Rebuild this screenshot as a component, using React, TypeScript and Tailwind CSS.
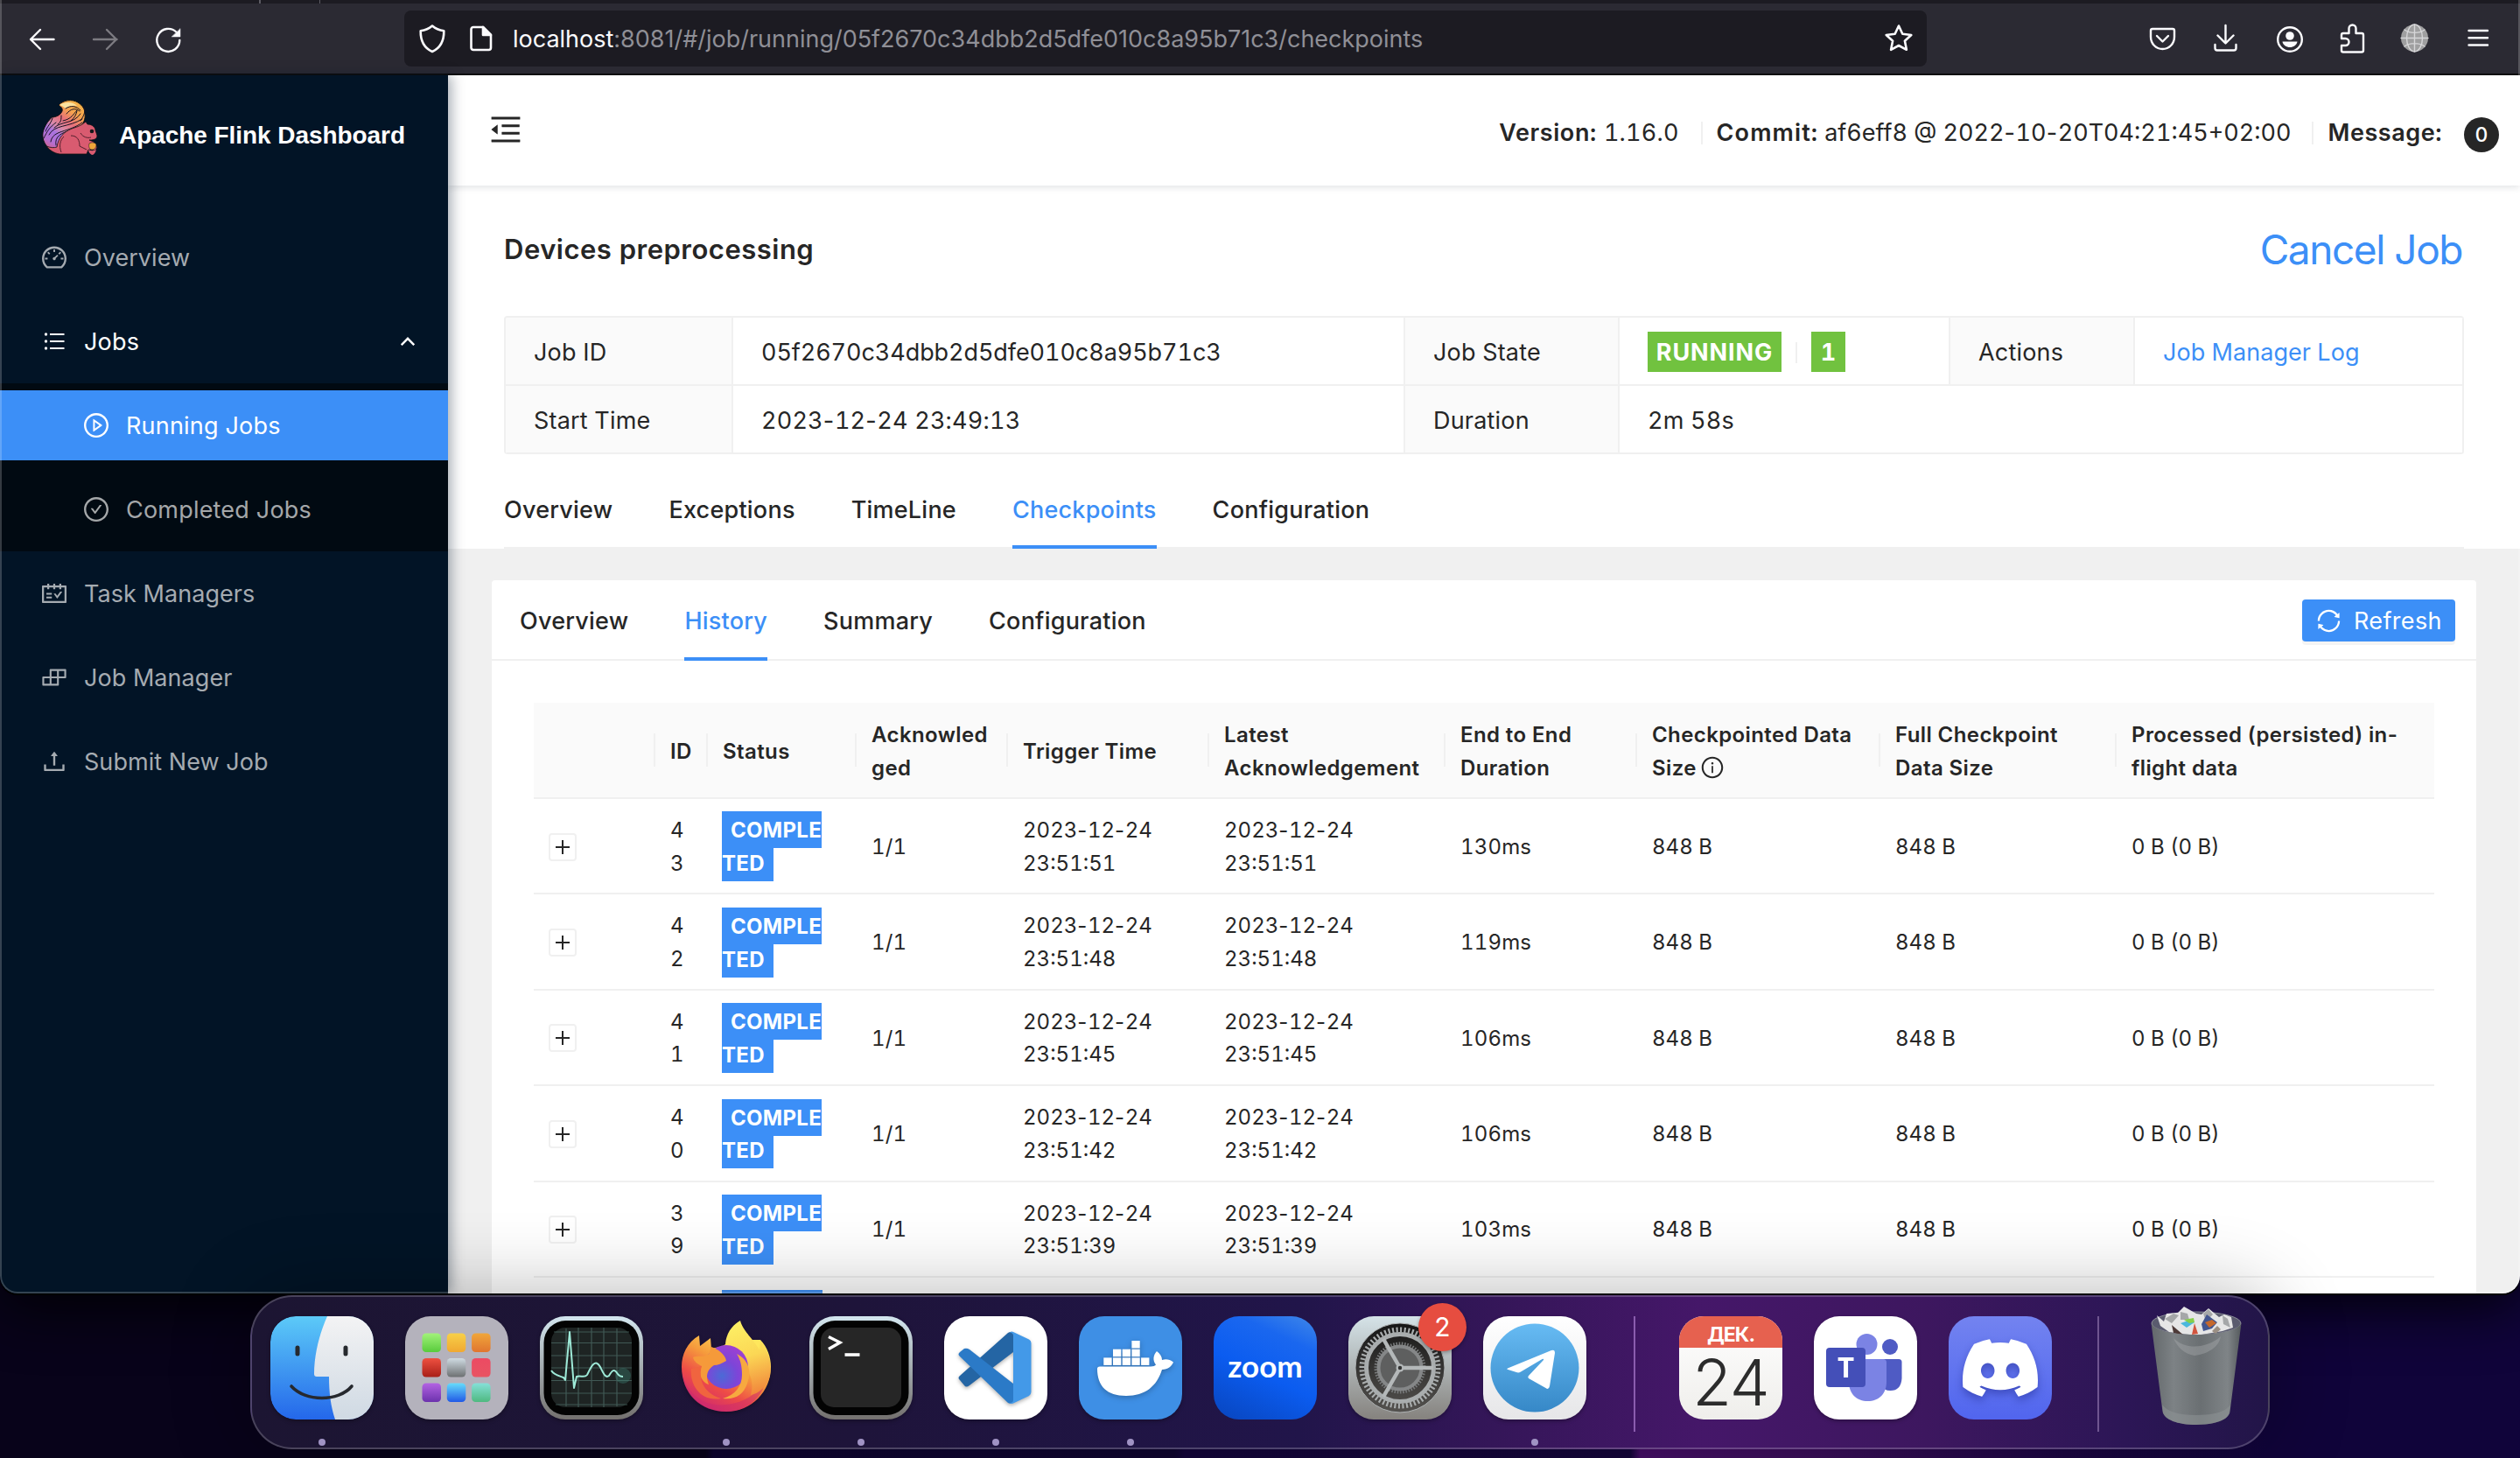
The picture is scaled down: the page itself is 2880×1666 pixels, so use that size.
import React from "react";
import {
  AiOutlineBuild,
  AiOutlineCheckCircle,
  AiOutlineDashboard,
  AiOutlineInfoCircle,
  AiOutlineMenuFold,
  AiOutlinePlayCircle,
  AiOutlineSchedule,
  AiOutlineSync,
  AiOutlineUpload,
} from "react-icons/ai";
import { SiDiscord } from "react-icons/si";

/* ---------- browser toolbar ---------- */

function ToolIcon({ children, dim }: { children: React.ReactNode; dim?: boolean }) {
  return (
    <svg
      viewBox="0 0 72 80"
      className={dim ? "h-20 w-[72px] shrink-0 text-[#7c7b81]" : "h-20 w-[72px] shrink-0 text-[#fbfbfe]"}
      fill="none"
      stroke="currentColor"
      strokeWidth="2.4"
      strokeLinecap="round"
      strokeLinejoin="round"
    >
      {children}
    </svg>
  );
}

function Toolbar() {
  return (
    <div className="flex h-[86px] shrink-0 flex-col bg-[#2b2a33]">
      <div className="flex h-1 shrink-0 bg-[#1c1b22] pl-[296px]">
        <div className="h-1 w-0.5 bg-[#5b5a62]" />
        <div className="ml-[67px] h-1 w-px bg-[#5b5a62]" />
      </div>
      <div className="flex h-20 shrink-0 items-center pl-3">
        <ToolIcon>
          <path d="M49.5 41H23M34 30L23 41l11 11" />
        </ToolIcon>
        <ToolIcon dim>
          <path d="M23 41h26.500M38 30l11 11-11 11" />
        </ToolIcon>
        <ToolIcon>
          <path d="M49.300 42a13 13 0 1 1-4-9.500" />
          <path d="M50 29v9h-9.500z" fill="currentColor" strokeWidth="0.500" />
        </ToolIcon>
        <div className="ml-[234px] flex h-16 w-[1740px] items-center rounded-lg bg-[#1c1b22] pl-4 pr-[15px]">
          <svg viewBox="0 0 32 34" className="h-[34px] w-8 text-[#fbfbfe]" fill="none" stroke="currentColor" strokeWidth="2.600" strokeLinejoin="round">
            <path d="M16 2.500c4 3.500 8 5 13.300 5.800C29.500 20 25 28 16 32 7 28 2.500 20 2.700 8.300 8 7.500 12 6 16 2.500z" />
          </svg>
          <svg viewBox="0 0 28 32" className="ml-[26px] h-8 w-7 text-[#fbfbfe]" fill="none" stroke="currentColor" strokeWidth="2.600" strokeLinejoin="round">
            <path d="M5 3h11l9 9v14.500a2.500 2.500 0 0 1-2.500 2.500H5a2.500 2.500 0 0 1-2.500-2.500V5.500A2.500 2.500 0 0 1 5 3z" />
            <path d="M16 3v9h9z" fill="currentColor" />
          </svg>
          <span className="ml-[22px] whitespace-nowrap pt-0.5 text-[27px] leading-10 tracking-[-0.010px] text-[#8f8f96]">
            <span className="text-[#fbfbfe]">localhost</span>:8081/#/job/running/05f2670c34dbb2d5dfe010c8a95b71c3/checkpoints
          </span>
          <svg viewBox="0 0 34 34" className="ml-auto h-[34px] w-[34px] text-[#fbfbfe]" fill="none" stroke="currentColor" strokeWidth="2.600" strokeLinejoin="round">
            <path d="M17 2.500l4.300 9.200 10 1.300-7.400 6.800 2 10L17 25l-8.900 4.800 2-10L2.700 13l10-1.300z" />
          </svg>
        </div>
        <div className="ml-[234px] flex">
          <ToolIcon>
            <path d="M24 29h23a2 2 0 0 1 2 2v7c0 8-6 14-13.500 14S22 46 22 38v-7a2 2 0 0 1 2-2zM29 37l6.500 6.500L42 37" />
          </ToolIcon>
          <ToolIcon>
            <path d="M35.500 25v20M26.500 36.500l9 9 9-9M23.500 47v4a2.500 2.500 0 0 0 2.500 2.500h19a2.500 2.500 0 0 0 2.500-2.500v-4" />
          </ToolIcon>
          <ToolIcon>
            <circle cx="37" cy="41" r="13.800" />
            <circle cx="37" cy="37" r="4.800" fill="currentColor" stroke="none" />
            <path d="M28.500 43.500h17c-.5 4-4.500 6.500-8.500 6.500s-8-2.500-8.500-6.500z" fill="currentColor" stroke="none" />
          </ToolIcon>
          <ToolIcon>
            <path d="M26 34h6.500v-5.500a4 4 0 0 1 8 0V34H47a2 2 0 0 1 2 2v17.500a2 2 0 0 1-2 2H26a2 2 0 0 1-2-2V48h4.500a4 4 0 0 0 0-8H24v-4a2 2 0 0 1 2-2z" />
          </ToolIcon>
          <ToolIcon>
            <circle cx="35.500" cy="39.500" r="15.500" fill="#9f9fa0" stroke="none" />
            <g stroke="#d6d6d8" strokeWidth="1.400">
              <path d="M20 39.500h31M35.500 24v31M24 30c6 4.500 17 4.500 23 0M24 49c6-4.500 17-4.500 23 0" />
              <ellipse cx="35.500" cy="39.500" rx="9" ry="15.500" />
            </g>
          </ToolIcon>
          <ToolIcon>
            <path d="M25.500 31h21.500M25.500 39.200h21.500M25.500 47.500h21.500" />
          </ToolIcon>
        </div>
      </div>
      <div className="h-0.5 shrink-0 bg-[#0c0c0d]" />
    </div>
  );
}

/* ---------- sidebar ---------- */

function Squirrel() {
  return (
    <svg viewBox="0 0 64 64" className="h-16 w-16 shrink-0">
      <defs>
        <linearGradient id="tail" x1="0.700" y1="0" x2="0.200" y2="1">
          <stop offset="0" stopColor="#f6b24a" />
          <stop offset="0.180" stopColor="#f4a24e" />
          <stop offset="0.360" stopColor="#e8707a" />
          <stop offset="0.520" stopColor="#d98aa8" />
          <stop offset="0.640" stopColor="#a873e0" />
          <stop offset="0.820" stopColor="#b56fd0" />
          <stop offset="1" stopColor="#dc5a72" />
        </linearGradient>
      </defs>
      <path d="M20 62C4 58-2 44 2 34 5 26 8 24 11 20c4 0 10-2 12-7 1-4-2-5-4-7C25 0 34-1 41 3c6 4 8 8 8 13 1 6-2 12-6 17C36 38 22 42 22 52z" fill="url(#tail)" stroke="#111" strokeWidth="1" />
      <path d="M20 6c8-5 16-3 20 1-5-1-9 0-13 3-2-2-4-3-7-4z" fill="#fbe3a0" />
      <g fill="none" stroke="#191322" strokeWidth="1" strokeLinecap="round">
        <path d="M27 10c6-4 12-3 17 2M28 16c5-6 10-7 15-3M24 24c10-2 12-8 16-12M14 32c8-8 22-4 30-16M8 40c6-12 22-8 38-18M10 48c2-14 20-10 36-22M4 36c2-6 6-8 8-15M2 44c4-8 6-12 14-18M16 52c-2-10 6-14 16-17M48 8c2 6 0 10-4 16M18 28c4-2 4-6 4-10M33 24c4-3 6-7 7-11" />
      </g>
      <path d="M20 62c-6-1-11-4-15-9 5 2 9 2 12 1 2-12 8-17 17-21 6-2 9-3 12-5l4-3 2 3c6 0 9 4 9 7 1 3 2 5 2 7-1 4-6 4-9 4l5 2 4 6-2 4-8-1-2 5z" fill="#d95b70" stroke="#111" strokeWidth="0.800" />
      <path d="M22 60c-3-8-1-14 3-18M33 41c8 0 10 6 10 12l8 4M44 38c3 5 8 6 12 5" fill="none" stroke="#53202c" strokeWidth="1" />
      <circle cx="57" cy="36" r="2.300" fill="#16161a" />
      <path d="M54 50c3-2 7-1 8 1 0 4-2 6-5 6s-4-4-3-7z" fill="#f0a53a" stroke="#222" strokeWidth="0.600" />
      <path d="M53 57c3 2 7 1 9 0-1 4-3 6-5 6-2-1-4-3-4-6z" fill="#d95b70" />
    </svg>
  );
}

function ListIcon() {
  return (
    <svg viewBox="0 0 32 32" className="h-8 w-8" stroke="currentColor" strokeWidth="2">
      <path d="M11 8h16.500M11 16h16.500M11 24h16.500" />
      <g fill="currentColor" stroke="none">
        <circle cx="6.500" cy="8" r="1.700" />
        <circle cx="6.500" cy="16" r="1.700" />
        <circle cx="6.500" cy="24" r="1.700" />
      </g>
    </svg>
  );
}

function MenuItem({
  icon,
  label,
  variant = "normal",
  children,
}: {
  icon: React.ReactNode;
  label: string;
  variant?: "normal" | "open" | "active" | "sub";
  children?: React.ReactNode;
}) {
  const look = {
    normal: "pl-[46px] text-[#a5abb1] tracking-[0.050px]",
    open: "pl-[46px] text-white tracking-[0.200px]",
    active: "pl-[94px] bg-[#3c8ff7] text-white tracking-[0.200px]",
    sub: "pl-[94px] text-[#a4a7a9] tracking-[0.200px]",
  }[variant];
  return (
    <div className={"my-2 flex h-20 items-center pr-[38px] text-[27px] " + look}>
      {icon}
      <span className="ml-[18px] pt-0.5 leading-10">{label}</span>
      {children}
    </div>
  );
}

function Sidebar() {
  return (
    <aside className="relative z-20 w-[512px] shrink-0 bg-[#021426] shadow-[4px_0_14px_rgba(0,21,41,0.350)]">
      <div className="flex h-[152px] items-start pl-12 pt-7">
        <Squirrel />
        <span className="ml-6 mt-5 whitespace-nowrap pt-px font-['Liberation_Sans',sans-serif] text-[28px] font-bold leading-10 tracking-[-0.060px] text-white">
          Apache Flink Dashboard
        </span>
      </div>
      <div className="flex flex-col pt-2">
        <MenuItem icon={<AiOutlineDashboard size={32} />} label="Overview" />
        <MenuItem icon={<ListIcon />} label="Jobs" variant="open">
          <svg viewBox="0 0 16 10" className="ml-auto h-2.5 w-4" fill="none" stroke="currentColor" strokeWidth="2.400">
            <path d="M0.800 9.200L8 1.800l7.200 7.400" />
          </svg>
        </MenuItem>
        <div className="flex flex-col bg-[#010a12]">
          <MenuItem icon={<AiOutlinePlayCircle size={32} />} label="Running Jobs" variant="active" />
          <MenuItem icon={<AiOutlineCheckCircle size={32} />} label="Completed Jobs" variant="sub" />
        </div>
        <MenuItem icon={<AiOutlineSchedule size={32} />} label="Task Managers" />
        <MenuItem icon={<AiOutlineBuild size={32} />} label="Job Manager" />
        <MenuItem icon={<AiOutlineUpload size={32} />} label="Submit New Job" />
      </div>
    </aside>
  );
}

/* ---------- page header ---------- */

/* Tabular digits with hyphens kept at their proportional width. */
function Stamp({ value }: { value: string }) {
  return (
    <>
      {value.split("-").map((part, i) => (
        <React.Fragment key={i}>
          {i > 0 && <span className="normal-nums tracking-[0.600px]">-</span>}
          {part}
        </React.Fragment>
      ))}
    </>
  );
}

function TopBar() {
  return (
    <header className="relative z-10 flex h-[126px] shrink-0 items-center bg-white pl-[45px] pr-6 text-[27px] text-[#262626] shadow-[0_2px_8px_rgba(0,21,41,0.120)]">
      <AiOutlineMenuFold size={42} className="mt-[-2px]" />
      <div className="ml-auto flex items-center whitespace-nowrap pt-1.5 leading-10 tabular-nums">
        <span>
          <b className="font-semibold tracking-[0.600px]">Version:</b>
          <span className="ml-2 tracking-[0.200px]">1.16.0</span>
        </span>
        <span className="ml-[25px] mr-4 h-[26px] w-0.5 bg-[#f0f0f0]" />
        <span>
          <b className="font-semibold tracking-[1.100px]">Commit:</b>
          <span className="ml-[7px]"><Stamp value="af6eff8 @ 2022-10-20T04:21:45+02:00" /></span>
        </span>
        <span className="ml-6 mr-4 h-[26px] w-0.5 bg-[#f0f0f0]" />
        <b className="font-semibold tracking-[0.550px]">Message:</b>
        <span className="ml-[25px] mt-1 flex h-10 w-10 items-center justify-center rounded-full bg-[#262626] text-[23px] font-medium text-white">
          0
        </span>
      </div>
    </header>
  );
}

const cell = "flex items-center border-b-2 border-r-2 border-[#f0f0f0] pl-8 pt-1";

function Descriptions() {
  return (
    <div className="mt-[3px] grid shrink-0 grid-cols-[260px_768px_245px_378px_211px_376px] grid-rows-[78px_78px] overflow-hidden rounded-sm border-l-2 border-t-2 border-[#f0f0f0] text-[27px] tabular-nums tracking-[0.200px]">
      <div className={cell + " bg-[#fafafa]"}>Job ID</div>
      <div className={cell + " tracking-[-0.080px]"}>05f2670c34dbb2d5dfe010c8a95b71c3</div>
      <div className={cell + " bg-[#fafafa]"}>Job State</div>
      <div className={cell + " font-bold text-white"}>
        <span className="mb-0.5 flex h-[46px] w-[153px] items-center justify-center bg-[#71c23f] pt-0.5 tracking-[0.900px]">RUNNING</span>
        <span className="mx-4 h-6 w-0.5 bg-[#f0f0f0]" />
        <span className="mb-0.5 flex h-[46px] w-[39px] items-center justify-center bg-[#71c23f] pt-0.5">1</span>
      </div>
      <div className={cell + " bg-[#fafafa]"}>Actions</div>
      <div className={cell + " text-[#3c8ff7] tracking-[0.050px]"}>Job Manager Log</div>
      <div className={cell + " bg-[#fafafa]"}>Start Time</div>
      <div className={cell}><span><Stamp value="2023-12-24 23:49:13" /></span></div>
      <div className={cell + " bg-[#fafafa]"}>Duration</div>
      <div className={cell + " col-span-3"}>2m 58s</div>
    </div>
  );
}

function Tab({ label, active, h }: { label: string; active?: boolean; h: string }) {
  return (
    <div
      className={
        h +
        " flex items-center pt-[3px] text-[27px] font-medium tracking-[0.230px] " +
        (active ? "text-[#3c8ff7] shadow-[inset_0_-4px_0_#3c8ff7]" : "")
      }
    >
      {label}
    </div>
  );
}

/* ---------- checkpoint table ---------- */

const grid = "grid grid-cols-[139px_60px_170px_173px_230px_270px_219px_278px_270px_363px]";
const heads = ["", "ID", "Status", "Acknowledged", "Trigger Time", "Latest Acknowledgement", "End to End Duration", "Checkpointed Data Size", "Full Checkpoint Data Size", "Processed (persisted) in-flight data"];
const rows = [
  ["43", "23:51:51", "130ms"],
  ["42", "23:51:48", "119ms"],
  ["41", "23:51:45", "106ms"],
  ["40", "23:51:42", "106ms"],
  ["39", "23:51:39", "103ms"],
];

function HistoryTable() {
  return (
    <div className="mx-12 mt-12 text-[24px] leading-[37.710px]">
      <div className={grid + " h-[110px] border-b-2 border-[#f0f0f0] bg-[#fafafa] font-semibold tracking-[0.400px]"}>
        {heads.map((h, i) => (
          <div key={i} className="flex items-center justify-between">
            <div className="min-w-0 flex-1 break-words pl-[17px] pr-3.5 pt-[3px]">
              {h}
              {i === 7 && <AiOutlineInfoCircle size={28} className="ml-1 inline align-[-5px]" />}
            </div>
            {i < 9 && <div className="h-[38px] w-0.5 bg-[#f0f0f0]" />}
          </div>
        ))}
      </div>
      {rows.map(([id, time, dur]) => (
        <div key={id} className={grid + " h-[109.400px] items-center border-b-2 border-[#f0f0f0] pt-0.5 tabular-nums tracking-[0.150px] [&>div]:pl-[17px]"}>
          <div>
            <div className="flex h-8 w-8 items-center justify-center rounded border-2 border-[#f0f0f0] bg-white">
              <svg viewBox="0 0 18 18" className="h-[18px] w-[18px]" stroke="#262626" strokeWidth="2">
                <path d="M1 9h16M9 1v16" />
              </svg>
            </div>
          </div>
          <div className="break-all pr-4">{id}</div>
          <div>
            <div className="-ml-px w-[115px] break-all">
              <span className="bg-[#3c8ff7] px-2.5 py-[6.500px] font-bold tracking-[0.300px] text-white">COMPLETED</span>
            </div>
          </div>
          <div>1/1</div>
          <div className="tracking-[0px]"><Stamp value="2023-12-24" /><br />{time}</div>
          <div className="tracking-[0px]"><Stamp value="2023-12-24" /><br />{time}</div>
          <div>{dur}</div>
          <div className="tracking-[0px]">848 B</div>
          <div className="tracking-[0px]">848 B</div>
          <div className="tracking-[0px]">0 B (0 B)</div>
        </div>
      ))}
      <div className={grid + " h-[109.400px] pt-[14px]"}>
        <div className="col-start-3 ml-4 h-10 w-[115px] bg-[#3c8ff7]" />
      </div>
    </div>
  );
}

function Main() {
  return (
    <div className="flex min-w-0 flex-1 flex-col bg-[#f0f0f0] text-[#262626]">
      <TopBar />
      <div className="flex h-[415px] shrink-0 flex-col bg-white px-16">
        <div className="flex h-[146px] shrink-0 items-center justify-between">
          <h1 className="text-[31px] font-semibold tracking-[0.500px]">Devices preprocessing</h1>
          <a className="mr-0.5 text-[46px] tracking-[-1.450px] text-[#3c8ff7]">Cancel Job</a>
        </div>
        <Descriptions />
        <div className="flex h-[108px] shrink-0 items-end gap-16 shadow-[inset_0_-2px_0_#f0f0f0]">
          <Tab label="Overview" h="h-[90px]" />
          <Tab label="Exceptions" h="h-[90px]" />
          <Tab label="TimeLine" h="h-[90px]" />
          <Tab label="Checkpoints" h="h-[90px]" active />
          <Tab label="Configuration" h="h-[90px]" />
        </div>
      </div>
      <div className="mx-[50px] mt-9 min-h-0 flex-1 overflow-hidden rounded-t-sm bg-white">
        <div className="flex h-[92px] items-center gap-16 pl-8 pr-6 shadow-[inset_0_-2px_0_#f0f0f0]">
          <Tab label="Overview" h="h-[92px]" />
          <Tab label="History" h="h-[92px]" active />
          <Tab label="Summary" h="h-[92px]" />
          <Tab label="Configuration" h="h-[92px]" />
          <button className="ml-auto flex h-12 w-[175px] items-center rounded bg-[#3c8ff7] pl-[15px] text-[27px] tracking-[0.350px] text-white shadow-[0_4px_0_rgba(0,0,0,0.045)]">
            <AiOutlineSync size={31} />
            <span className="ml-[13px] pt-0.5">Refresh</span>
          </button>
        </div>
        <HistoryTable />
      </div>
    </div>
  );
}

/* ---------- dock ---------- */

function DockApp({ children, dot }: { children: React.ReactNode; dot?: boolean }) {
  return (
    <div className="flex w-[118px] shrink-0 flex-col items-center">
      {children}
      {dot && <span className="mt-[22px] h-2 w-2 rounded-full bg-[#a093c4]" />}
    </div>
  );
}

const ic = "h-[118px] w-[118px] overflow-visible drop-shadow-[0_2px_2px_rgba(0,0,0,0.300)]";
const box = { x: 0, y: 0, width: 118, height: 118, rx: 29 };

function Finder() {
  return (
    <svg viewBox="0 0 118 118" className={ic}>
      <defs>
        <linearGradient id="fb" x1="0" y1="0" x2="0" y2="1"><stop offset="0" stopColor="#5ccaf8" /><stop offset="1" stopColor="#2467ea" /></linearGradient>
        <linearGradient id="fw" x1="0" y1="0" x2="0" y2="1"><stop offset="0" stopColor="#f3f3f4" /><stop offset="1" stopColor="#cfd9e3" /></linearGradient>
        <clipPath id="fc"><rect {...box} /></clipPath>
      </defs>
      <g clipPath="url(#fc)">
        <rect {...box} fill="url(#fb)" />
        <path d="M65 0C56 20 50 44 50 66q0 3 3 3h14c0 18 2 34 7 49h50V0z" fill="url(#fw)" />
      </g>
      <g stroke="#26292e" strokeLinecap="round" fill="none">
        <path d="M31 36v7M86 36v7" strokeWidth="5" />
        <path d="M24 80c16 18 54 18 69 0" strokeWidth="3.600" />
      </g>
    </svg>
  );
}

const tiles = [
  ["#a2f27a", "#58cb3c"], ["#f7d048", "#f0a832"], ["#f0a63a", "#e0752f"],
  ["#ee5040", "#a81f18"], ["#cfdbe2", "#6d7072"], ["#ec4a63", "#e85462"],
  ["#b363e2", "#6c32ad"], ["#66dcfb", "#2159e6"], ["#85e0d8", "#4fb980"],
];

function Launchpad() {
  return (
    <svg viewBox="0 0 118 118" className={ic}>
      <defs>
        {tiles.map(([a, b], i) => (
          <linearGradient key={i} id={"t" + i} x1="0" y1="0" x2="0" y2="1"><stop offset="0" stopColor={a} /><stop offset="1" stopColor={b} /></linearGradient>
        ))}
      </defs>
      <rect {...box} fill="#b4b2bc" />
      {tiles.map((_, i) => (
        <rect key={i} x={19.500 + (i % 3) * 28.300} y={19.500 + Math.floor(i / 3) * 28.500} width="21.500" height="21.500" rx="4.500" fill={`url(#t${i})`} />
      ))}
    </svg>
  );
}

function Bezel() {
  return (
    <>
      <defs><linearGradient id="bz" x1="0" y1="0" x2="0" y2="1"><stop offset="0" stopColor="#d3e6ef" /><stop offset="1" stopColor="#73706e" /></linearGradient></defs>
      <rect {...box} fill="url(#bz)" />
      <rect x="4.500" y="5" width="109" height="108" rx="25" fill="#030303" />
    </>
  );
}

function Monitor() {
  return (
    <svg viewBox="0 0 118 118" className={ic}>
      <Bezel />
      <rect x="13" y="13" width="92" height="91" rx="16" fill="#1e2423" />
      <g stroke="#4f6f69" strokeWidth="1.200" opacity="0.700">
        <path d="M30 14v89M44 13v91M59 13v91M73 13v91M88 14v89M16 18h86M13 30.500h92M13 45h92M13 59h92M13 73.500h92M13 88h92M18 101h82" />
      </g>
      <circle cx="95" cy="68" r="9" fill="#3f8a7b" opacity="0.350" />
      <path d="M13 62c3 5 9 6 14 8l2 3 5-55 5 64 3-13c4-2 9 2 12-2 4-8 9-20 15-9 4 8 6 13 10 10 4-7 6-8 10-2 2 3 4 3 6 3" fill="none" stroke="#9eead8" strokeWidth="2" strokeLinejoin="round" />
    </svg>
  );
}

function Firefox() {
  return (
    <svg viewBox="0 0 118 118" className={ic}>
      <defs>
        <linearGradient id="ff1" x1="0.800" y1="0.100" x2="0.250" y2="0.950"><stop offset="0" stopColor="#ffe75c" /><stop offset="0.400" stopColor="#f59a3c" /><stop offset="0.700" stopColor="#ee4b47" /><stop offset="1" stopColor="#d0296f" /></linearGradient>
        <linearGradient id="ff2" x1="0.300" y1="0" x2="0.500" y2="1"><stop offset="0" stopColor="#fdf065" /><stop offset="0.500" stopColor="#fbd755" /><stop offset="1" stopColor="#f28a3c" /></linearGradient>
        <radialGradient id="ff3" cx="0.400" cy="0.700" r="0.800"><stop offset="0" stopColor="#4b6ad6" /><stop offset="0.450" stopColor="#7d45d8" /><stop offset="1" stopColor="#a43fd0" /></radialGradient>
      </defs>
      <path d="M8 58c0-14 6-28 20-36l1 12 12-9 1 12c6-2 10 0 16-5l30-5 10 0c8 8 12 20 12 31 0 28-22 51-51 51S8 88 8 58z" fill="url(#ff1)" />
      <path d="M9 64c4 26 26 40 50 37 22-2 38-14 46-31-4 24-24 39-46 39C30 109 10 90 9 64z" fill="#cc2a6e" opacity="0.500" />
      <path d="M58 34C58 20 66 10 75 5c3 12 16 22 22 34l1-11c9 10 13 26 11 40-3 12-12 20-22 22 4-14 0-28-14-40z" fill="url(#ff2)" />
      <circle cx="59" cy="58" r="25" fill="url(#ff3)" />
      <path d="M71 43c12 6 18 18 12 34-4 12-14 19-28 17 14-4 22-14 22-27 0-10-2-18-6-24z" fill="#f7a93f" />
      <path d="M21 47c6-3 12 1 18-4l3-8c6 2 16 8 17 16-5 3-10 5-14 5-8 5-10 12-6 22C28 74 28 62 31 57c-4-2-9-5-10-10z" fill="#f59a3a" />
      <path d="M31 57c-4 12 0 30 22 37-22 4-36-14-34-34z" fill="#f0643f" />
    </svg>
  );
}

function Terminal() {
  return (
    <svg viewBox="0 0 118 118" className={ic}>
      <Bezel />
      <rect x="13" y="13" width="92" height="91" rx="15" fill="#262626" />
      <path d="M22 23.500l13 6.500-13 7.500" fill="none" stroke="#fff" strokeWidth="3.400" />
      <path d="M40.500 44h17" stroke="#fff" strokeWidth="3.600" />
    </svg>
  );
}

function VSCode() {
  return (
    <svg viewBox="0 0 118 118" className={ic}>
      <rect {...box} fill="#fff" />
      <g className="drop-shadow-[0_2px_2px_rgba(0,0,0,0.300)]">
        <path d="M18 73c-2-2-2-3 0-5l55-49q3-2 6 0v22L29 79q-4 3-6 0z" fill="#2465a4" />
        <path d="M18 46c-2-2-2-3 0-5l5-4q3-1 6 1l50 39v21q-3 3-6 1z" fill="#2b7ac7" />
        <path d="M75 18.500q2-1.500 4-.5l18 8.500q2.500 1.500 2.500 4v56q0 3-2.500 4.500l-18 8.500q-2 1-4-.5 4 0 4-3.500V22q0-3-4-3.500z" fill="#4399e8" />
      </g>
    </svg>
  );
}

function Docker() {
  return (
    <svg viewBox="0 0 118 118" className={ic}>
      <rect {...box} fill="#3e8fe5" />
      <g fill="#fff" className="drop-shadow-[0_2px_3px_rgba(0,0,0,0.250)]">
        {[[0, 2], [1, 2], [2, 2], [3, 2], [4, 2], [1, 1], [2, 1], [3, 1], [3, 0]].map(([x, y], i) => (
          <rect key={i} x={28.300 + x * 10.700} y={28 + y * 9.700} width="9.300" height="8.500" />
        ))}
        <path d="M21 60q0-2.500 3-2.500h58c3 0 5-1 6-2-4-5-3-11 1-15.500 4 3 6 6 6 10 5-1.500 9-.5 13 2.500-2 5-6 8-13 8.500C89 80 76 91 54 91c-22 0-33-11-33-31z" />
      </g>
    </svg>
  );
}

function Zoom() {
  return (
    <div className="flex h-[118px] w-[118px] items-center justify-center rounded-[29px] bg-[linear-gradient(205deg,#4088e8_0%,#1a67ef_24%,#0b5cf0_55%,#0845bd_100%)]">
      <span className="mt-[-6px] font-['Lato',sans-serif] text-[35px] font-bold leading-none text-white">zoom</span>
    </div>
  );
}

function Settings() {
  return (
    <svg viewBox="0 0 118 118" className={ic}>
      <defs>
        <linearGradient id="sg" x1="0" y1="0" x2="0" y2="1"><stop offset="0" stopColor="#d5e3e8" /><stop offset="1" stopColor="#85827e" /></linearGradient>
        <linearGradient id="sd" x1="0" y1="0" x2="0" y2="1"><stop offset="0" stopColor="#161616" /><stop offset="1" stopColor="#54524f" /></linearGradient>
      </defs>
      <rect {...box} fill="url(#sg)" />
      <circle cx="59" cy="59" r="51" fill="url(#sd)" stroke="#aeb2b3" strokeWidth="1" />
      <circle cx="59" cy="59" r="43.500" fill="none" stroke="#a9adae" strokeWidth="6" strokeDasharray="2.100 2.450" />
      <circle cx="59" cy="59" r="38.500" fill="none" stroke="#a9adae" strokeWidth="5" />
      <circle cx="59" cy="59" r="27.500" fill="none" stroke="#77797a" strokeWidth="4" strokeDasharray="1.600 1.600" />
      <circle cx="59" cy="59" r="24.500" fill="#5e5f5f" stroke="#858788" strokeWidth="4" />
      <g stroke="#b4b8b9" strokeWidth="4.500"><path d="M59 59h38M59 59L40 26M59 59L40 92" /></g>
      <circle cx="59" cy="59" r="4.500" fill="#b4b8b9" />
      <circle cx="59" cy="59" r="2.200" fill="#333" />
    </svg>
  );
}

function Telegram() {
  return (
    <svg viewBox="0 0 118 118" className={ic}>
      <defs>
        <linearGradient id="tg" x1="0" y1="0" x2="0" y2="1"><stop offset="0" stopColor="#67bbf3" /><stop offset="1" stopColor="#3688c7" /></linearGradient>
        <linearGradient id="tw" x1="0" y1="0" x2="0" y2="1"><stop offset="0" stopColor="#fff" /><stop offset="1" stopColor="#e6e6e8" /></linearGradient>
      </defs>
      <rect {...box} fill="url(#tw)" />
      <circle cx="59" cy="59" r="50.500" fill="url(#tg)" />
      <path d="M28 59.500L78 39q4-1.500 4 3l-6 38q-1 4.500-4.500 2L52 71q-1.500-1.500 0-3l17-18q1-2-1.500-1L43 63.500q-2.500 1.500-5 .5l-9.500-3q-2-.5-.5-1.500z" fill="#fff" />
    </svg>
  );
}

function Calendar() {
  return (
    <div className="flex h-[118px] w-[118px] flex-col items-center overflow-hidden rounded-[28px] bg-gradient-to-b from-white to-[#efeeeb]">
      <div className="flex h-9 w-full items-center justify-center bg-[#e6614f] pt-1.5 font-['Inter',sans-serif] text-[23px] font-bold leading-none tracking-[-1px] text-white">ДЕК.</div>
      <div className="mt-0.5 font-['Inter',sans-serif] text-[73px] font-light leading-[75px] tracking-[-1px] text-[#2c2c2c]">24</div>
    </div>
  );
}

function Teams() {
  return (
    <svg viewBox="0 0 118 118" className={ic}>
      <rect {...box} fill="#fff" />
      <circle cx="87" cy="35" r="9" fill="#4f5bc4" />
      <path d="M78 49h19q3.500 0 3.500 3.500V71q-1 14-13 14-8 0-9.500-6z" fill="#4f5bc4" />
      <circle cx="60.500" cy="32" r="12" fill="#7b83e4" />
      <path d="M40 49h39q4 0 4 4v22c0 14-9 22-21.500 22S40 89 40 75z" fill="#7b83e4" />
      <rect x="14" y="36" width="45" height="45" rx="4" fill="#444fb8" />
      <text x="36.500" y="70" textAnchor="middle" fill="#fff" fontFamily="Open Sans, sans-serif" fontWeight="700" fontSize="33">T</text>
    </svg>
  );
}

function Discord() {
  return (
    <div className="flex h-[118px] w-[118px] items-center justify-center rounded-[29px] bg-gradient-to-b from-[#7383f0] to-[#5165ee]">
      <SiDiscord size={86} className="text-white drop-shadow-[0_5px_5px_rgba(30,40,140,0.450)]" />
    </div>
  );
}

function Trash() {
  return (
    <svg viewBox="0 0 104 136" className="h-[136px] w-[104px]">
      <defs>
        <linearGradient id="tr" x1="0" y1="0" x2="1" y2="0"><stop offset="0" stopColor="#63686b" /><stop offset="0.250" stopColor="#7d8285" /><stop offset="0.550" stopColor="#6a6f72" /><stop offset="0.850" stopColor="#7f8487" /><stop offset="1" stopColor="#54595c" /></linearGradient>
      </defs>
      <ellipse cx="52" cy="19" rx="51" ry="13" fill="#5a5b6e" stroke="#8b8d98" strokeWidth="1" />
      <path d="M7 10l4 12 10 7 31 4 30-5 12-4-2-12-8-3-6 3-12-10-8 7-6-1-14-8-7 7-13 1-3 9z" fill="#e6e6e6" />
      <path d="M16 14l10-6 6 2-8 9zM34 6l8 2 2 7-10 0zM60 8l6-5 5 6-8 8zM82 10l6 4 3 10-8-4z" fill="#a5a7a8" />
      <path d="M34 19l12-4 4 3-9 6z" fill="#4bb8dc" />
      <path d="M38 15l11-2 1 5-6 1z" fill="#86cf4a" />
      <path d="M58 20l6-11 12 9-6 7-10 3z" fill="#43558f" />
      <path d="M62 18l8-3 5 4-8 5z" fill="#c4682d" />
      <path d="M24 21l14 12-12-3z" fill="#4d3a38" />
      <path d="M50 19l4 12-7 1z" fill="#d2553f" />
      <path d="M70 28l6-6 4 4-6 5z" fill="#9b8f84" />
      <path d="M0.500 19c2 7 22 13 51.500 13s49-6 51.500-13l-13 101c-1 9-16 15-38 15s-37-6-39-15z" fill="url(#tr)" />
      <path d="M26 36c14 14 38 12 54-2-2 12-14 20-30 22-12-2-20-10-24-20z" fill="#a9adb0" opacity="0.400" />
      <path d="M13 112c6 8 18 12 39 12s34-4 39-12l-1 8c-1 9-16 15-38 15s-37-6-38-15z" fill="#8e9396" opacity="0.550" />
    </svg>
  );
}

function Dock() {
  return (
    <div className="relative z-30 mt-0.5 flex h-[176px] w-[2308px] shrink-0 self-center rounded-[48px] border-2 border-white/20 bg-[linear-gradient(90deg,#1c1532_0%,#1e143a_30%,#21154a_52%,#351659_62%,#451769_72%,#3d175f_83%,#2c1656_93%,#221548_100%)] pl-[21px] pt-[22px] shadow-[0_0_90px_rgba(0,0,0,0.300)]">
      <div className="flex gap-9">
        <DockApp dot><Finder /></DockApp>
        <DockApp><Launchpad /></DockApp>
        <DockApp><Monitor /></DockApp>
        <DockApp dot><Firefox /></DockApp>
        <DockApp dot><Terminal /></DockApp>
        <DockApp dot><VSCode /></DockApp>
        <DockApp dot><Docker /></DockApp>
        <DockApp><Zoom /></DockApp>
        <DockApp>
          <div className="relative">
            <Settings />
            <span className="absolute -right-[17px] -top-[15px] flex h-[55px] w-[55px] items-center justify-center rounded-full bg-[#e64d40] text-[30px] text-white shadow-[0_2px_4px_rgba(0,0,0,0.300)]">
              2
            </span>
          </div>
        </DockApp>
        <DockApp dot><Telegram /></DockApp>
      </div>
      <div className="ml-[54px] h-[132px] w-0.5 bg-[#8a5cae]" />
      <div className="ml-[50px] flex gap-9">
        <DockApp><Calendar /></DockApp>
        <DockApp><Teams /></DockApp>
        <DockApp><Discord /></DockApp>
      </div>
      <div className="ml-[52px] h-[132px] w-0.5 bg-[#6f5590]" />
      <div className="-mt-[11px] ml-[59px]">
        <Trash />
      </div>
    </div>
  );
}

export default function App() {
  return (
    <div className="relative flex h-[1666px] w-[2880px] flex-col overflow-hidden bg-[linear-gradient(90deg,#08031a_0%,#08031a_28%,#0d0430_28.300%,#0f0530_46.600%,#14053c_47%,#15063c_64.700%,#470f69_65.100%,#3c0f5c_72%,#1c0644_82%,#10043a_90%,#10043a_100%)] font-['Inter',sans-serif]">
      <div className="relative flex h-[1478px] shrink-0 flex-col overflow-hidden rounded-b-[20px] shadow-[0_2px_0_#000,0_10px_70px_#000]">
        <Toolbar />
        <div className="flex min-h-0 flex-1">
          <Sidebar />
          <Main />
        </div>
        <div className="pointer-events-none absolute inset-0 z-30 rounded-b-[20px] border-x-2 border-b-2 border-white/20" />
      </div>
      <Dock />
    </div>
  );
}
